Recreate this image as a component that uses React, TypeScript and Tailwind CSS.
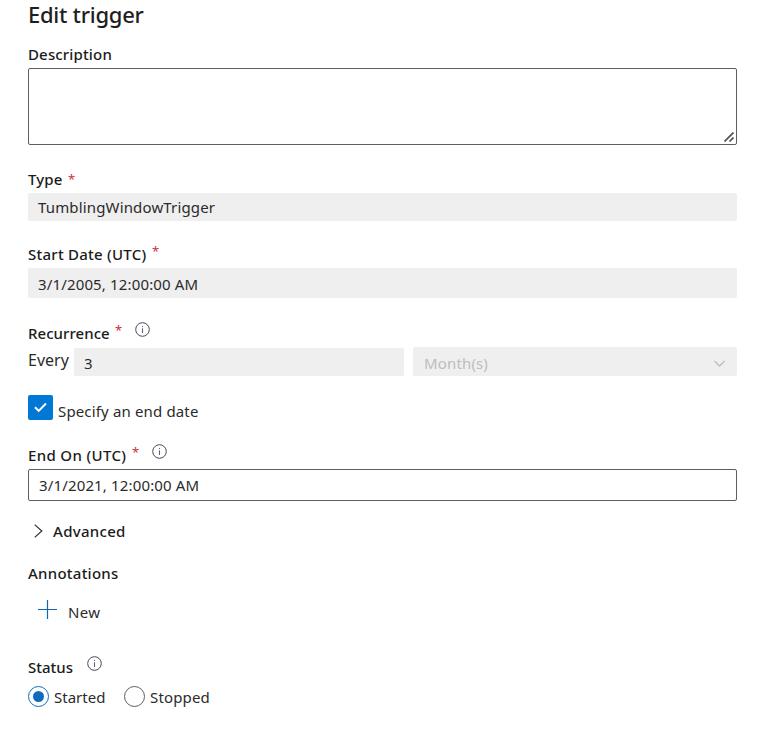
import type { ReactNode } from "react";

function Label({ children, className = "" }: { children: ReactNode; className?: string }) {
  return (
    <span className={`shrink-0 whitespace-pre text-[15px] leading-5 font-medium text-[#1b1b1b] ${className}`}>{children}</span>
  );
}

function Required({ className = "" }: { className?: string }) {
  return <span className={`w-2 shrink-0 text-[13px] leading-5 text-[#c8323c] ${className}`}>*</span>;
}

function Info({ className = "" }: { className?: string }) {
  return (
    <svg className={`h-[15px] w-[15px] shrink-0 ${className}`} viewBox="0 0 15 15" fill="none">
      <circle cx="7.5" cy="7.5" r="6.8" stroke="#4a4a50" strokeWidth="1" />
      <path d="M7.5 6.3V11" stroke="#6b5a80" strokeWidth="1.1" />
      <path d="M7.5 3.9V5" stroke="#6b5a80" strokeWidth="1.1" />
    </svg>
  );
}

export default function App() {
  return (
    <main className="flex h-[742px] w-[763px] flex-col overflow-hidden bg-white pr-[26px] pl-7 font-['Noto_Sans','Open_Sans',sans-serif] text-[15px] leading-5 tracking-[0.15px] text-[#2b2b2b]">
      <h1 className="h-11 text-[22px] leading-[28px] font-medium tracking-[-0.28px] text-[#1f1f1f]">Edit trigger</h1>

      <Label>Description</Label>
      <div className="mt-1 flex h-[77px] items-end justify-end rounded-[2px] border border-[#605e5c] p-[2px]">
        <svg className="h-[10px] w-[10px]" viewBox="0 0 10 10" fill="none" stroke="#55534f" strokeWidth="1.7">
          <path d="M0.5 9.5L9.5 0.5M5.5 9.5L9.5 5.5" />
        </svg>
      </div>

      <div className="mt-6 flex h-5">
        <Label className="w-10">Type</Label>
        <Required />
      </div>
      <div className="mt-1 flex h-7 items-center rounded-[2px] bg-[#efefef] pl-[10px]">
        <span>TumblingWindowTrigger</span>
      </div>

      <div className="mt-[23px] flex h-5">
        <Label className="w-[124px] tracking-[0.25px]">Start Date (UTC)</Label>
        <Required className="-mt-[3px]" />
      </div>
      <div className="mt-1 flex h-[30px] items-center rounded-[2px] bg-[#efefef] pt-[2px] pl-[10px]">
        <span>3/1/2005, 12:00:00 AM</span>
      </div>

      <div className="mt-[25px] flex h-5">
        <Label className="w-[87px] tracking-[0.05px]">Recurrence</Label>
        <Required className="-mt-[3px]" />
        <Info className="-mt-px ml-3" />
      </div>
      <div className="mt-1 flex h-[29px]">
        <span className="mt-[3px] w-[46px] text-[16px] tracking-normal">Every</span>
        <div className="mt-px flex h-7 w-[330px] items-center rounded-[2px] bg-[#efefef] pt-[2px] pl-[10px]">3</div>
        <div className="ml-[9px] flex h-[29px] flex-1 items-center justify-between rounded-[2px] bg-[#efefef] pt-[3px] pr-3 pl-[11px] text-[#bebdbc]">
          <span>Month(s)</span>
          <svg className="h-[7px] w-[11px]" viewBox="0 0 12 7" fill="none" stroke="#bebdbc" strokeWidth="1.4">
            <path d="M0.5 0.7L6 6.2L11.5 0.7" />
          </svg>
        </div>
      </div>

      <div className="mt-[19px] flex h-[25px]">
        <div className="flex h-[25px] w-[25px] items-center justify-center rounded-[2px] bg-[#0078d4]">
          <svg className="h-[11px] w-[13px]" viewBox="0 0 13 11" fill="none" stroke="white" strokeWidth="2">
            <path d="M1 5.2L4.7 8.9L12 1.5" />
          </svg>
        </div>
        <span className="mt-[6px] ml-[5px]">Specify an end date</span>
      </div>

      <div className="mt-[25px] flex h-5">
        <Label className="w-[104px] tracking-[0.35px]">End On (UTC)</Label>
        <Required className="-mt-[3px]" />
        <Info className="-mt-px ml-3" />
      </div>
      <div className="mt-1 flex h-8 items-center rounded-[2px] border border-[#605e5c] pl-[10px]">
        <span>3/1/2021, 12:00:00 AM</span>
      </div>

      <div className="mt-5 flex h-5">
        <svg className="mt-[3px] ml-[6px] h-[14px] w-[9px]" viewBox="0 0 9 14" fill="none" stroke="#323130" strokeWidth="1.2">
          <path d="M0.7 0.6L7.8 7L0.7 13.4" />
        </svg>
        <Label className="ml-[10px] tracking-[0.3px]">Advanced</Label>
      </div>

      <div className="mt-[22px] flex h-5">
        <Label className="tracking-[0.25px]">Annotations</Label>
      </div>
      <div className="mt-[19px] flex h-5">
        <svg className="-mt-[2px] ml-[10px] h-[19px] w-[19px]" viewBox="0 0 19 19" fill="none" stroke="#1267b4" strokeWidth="1.2">
          <path d="M0 9.5H19M9.5 0V19" />
        </svg>
        <span className="ml-[11px] tracking-[0.3px]">New</span>
      </div>

      <div className="mt-[35px] flex h-5">
        <Label className="w-[59px] tracking-normal">Status</Label>
        <Info className="-mt-px" />
      </div>
      <div className="mt-[9px] flex h-[21px]">
        <div className="flex h-[21px] w-[21px] items-center justify-center rounded-full border border-[#0f6cbd]">
          <div className="h-[11px] w-[11px] rounded-full bg-[#0f6cbd]" />
        </div>
        <span className="mt-px ml-[5px] w-[70px] tracking-normal">Started</span>
        <div className="h-[21px] w-[21px] rounded-full border border-[#605e5c]" />
        <span className="mt-px ml-[5px]">Stopped</span>
      </div>
    </main>
  );
}
